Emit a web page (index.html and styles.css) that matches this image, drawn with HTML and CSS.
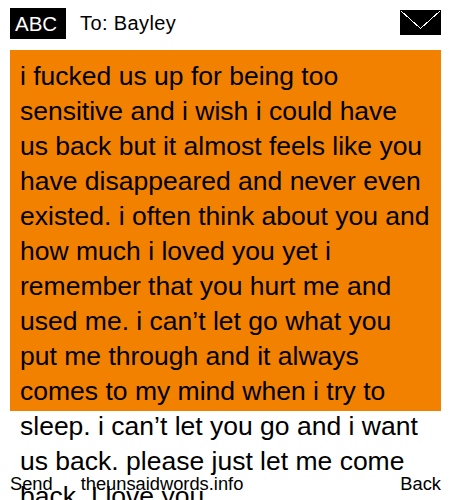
FILE: index.html
```html
<!DOCTYPE html>
<html lang="en">
<head>
  <meta charset="UTF-8" />
  <title>Message</title>
  <link rel="stylesheet" href="styles.css">
</head>
<body>
  <div class="phone">
    <div class="header">
      <span class="mode">ABC</span>
      <span class="to">To: Bayley</span>
      <svg class="envelope" width="41" height="25" viewBox="0 0 41 25">
        <rect width="41" height="25" fill="#000" />
        <path d="M1 1 L20.500 18.500 L40 1" fill="none" stroke="#fff" stroke-width="1" shape-rendering="crispEdges" />
      </svg>
    </div>
    <div class="message">i fucked us up for being too sensitive and i wish i could have us back but it almost feels like you have disappeared and never even existed. i often think about you and how much i loved you yet i remember that you hurt me and used me. i can’t let go what you put me through and it always comes to my mind when i try to sleep. i can’t let you go and i want us back. please just let me come back. I love you.</div>
    <div class="footer">
      <span class="send">Send</span>
      <span class="site">theunsaidwords.info</span>
      <span class="back">Back</span>
    </div>
  </div>
</body>
</html>
```

FILE: styles.css
```css
html, body {
  margin: 0;
  padding: 0;
}
body {
  background: #fff;
  color: #000;
  font-family: "Liberation Sans", Arial, sans-serif;
  overflow: hidden;
}
.phone {
  position: relative;
  width: 450px;
  height: 500px;
  overflow: hidden;
}
.header {
  display: flex;
  align-items: center;
  height: 31px;
  padding: 8px 9px 11px 10px;
}
.mode {
  width: 51px;
  height: 31px;
  padding-left: 5px;
  line-height: 31px;
  background: #000;
  color: #fff;
  font-size: 20.5px;
}
.to {
  margin-left: 14px;
  font-size: 20px;
  letter-spacing: 0.4px;
}
.envelope {
  align-self: flex-start;
  margin-left: auto;
  margin-top: 2px;
}
.message {
  width: 431px;
  height: 361px;
  margin-left: 10px;
  padding: 9px 10px 0;
  box-sizing: border-box;
  background: #f28100;
  font-size: 26.5px;
  line-height: 35px;
}
.footer {
  position: absolute;
  left: 10px;
  right: 9px;
  bottom: 5px;
  display: flex;
  font-size: 18.3px;
  line-height: 22px;
}
.site {
  margin-left: 28px;
}
.back {
  margin-left: auto;
}
```
